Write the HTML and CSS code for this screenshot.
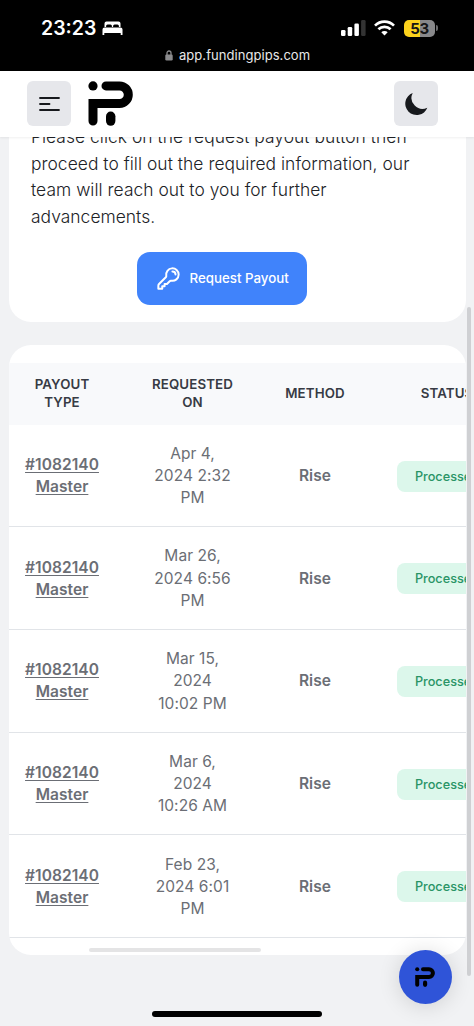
FILE: index.html
```html
<!DOCTYPE html>
<html lang="en">
<head>
<meta charset="utf-8">
<title>Payouts</title>
<link rel="stylesheet" href="styles.css">
</head>
<body>
<div class="status">
  <div class="status-row">
    <div class="clock"><span>23:23</span>
      <svg width="21" height="15" viewBox="0 0 21 15" fill="#fff"><path d="M2.500 6V2.500A2 2 0 0 1 4.500.5h12a2 2 0 0 1 2 2V6h-1.600V5a1.500 1.500 0 0 0-1.500-1.500h-2.800A1.500 1.500 0 0 0 11.100 5v1H9.900V5a1.500 1.500 0 0 0-1.500-1.500H5.600A1.500 1.500 0 0 0 4.100 5v1z"/><path d="M2.500 6.500h16a2 2 0 0 1 2 2V14h-1.800v-2H2.300v2H.5V8.500a2 2 0 0 1 2-2z"/></svg>
    </div>
    <div class="signals">
      <svg width="25" height="16" viewBox="0 0 25 16" fill="#fff"><rect x="0" y="10" width="4.500" height="6" rx="1.300"/><rect x="6.700" y="7" width="4.500" height="9" rx="1.300"/><rect x="13.400" y="3.500" width="4.500" height="12.500" rx="1.300"/><rect x="20.100" y="0" width="4.500" height="16" rx="1.300" fill="#333"/></svg>
      <svg class="wifi" width="21" height="16" viewBox="0 0 21 16" fill="none" stroke="#fff" stroke-width="2.700"><path d="M1 5.600a13.500 13.500 0 0 1 19 0M4.400 9.300a8.700 8.700 0 0 1 12.200 0"/><path d="M10.500 15.500 7.300 12.200a4.600 4.600 0 0 1 6.400 0z" fill="#fff" stroke="none"/></svg>
      <div class="battery">53</div><i class="battery-tip"></i>
    </div>
  </div>
  <div class="address"><svg width="8" height="11" viewBox="0 0 8 11"><path d="M2 5V3a2 2 0 0 1 4 0v2" fill="none" stroke="#8b8b8d" stroke-width="1.300"/><rect x=".3" y="4.500" width="7.400" height="6" rx="1.200" fill="#8b8b8d"/></svg><span>app.fundingpips.com</span></div>
</div>
<header class="topbar">
  <div class="square"><svg width="21" height="14" viewBox="0 0 21 14" stroke="#17191d" stroke-width="1.800" stroke-linecap="round"><path d="M1 1h19M1 7h9.500M1 13h19"/></svg></div>
  <svg class="logo" width="45" height="45" viewBox="0 0 45 45"><circle cx="5" cy="4.900" r="4.600"/><path d="M18 4.900H31.500A8.800 8.800 0 0 1 31.500 22.500H5V40" fill="none" stroke="#000" stroke-width="9" stroke-linecap="round"/><rect x="18" y="30.500" width="9.400" height="14.300" rx="4.700"/></svg>
  <div class="square moon"><svg width="24" height="24" viewBox="0 0 24 24" fill="#17191d"><path d="M8.700 1A11.400 11.400 0 1 0 23.300 15.800 11 11 0 0 1 8.700 1z"/></svg></div>
</header>
<main class="page">
  <section class="card intro">
    <p>Please click on the request payout button then<br>proceed to fill out the required information, our<br>team will reach out to you for further<br>advancements.</p>
    <button class="request"><svg width="25" height="25" viewBox="0 0 24 24" fill="none" stroke="#fff" stroke-width="1.900" stroke-linecap="round" stroke-linejoin="round"><path d="M15.750 5.250a3 3 0 0 1 3 3m3 0a6 6 0 0 1-7.030 5.910c-.560-.100-1.160.030-1.560.430L10.500 17.250H8.250v2.250H6v2.250H2.250v-2.820c0-.600.240-1.170.660-1.590l6.500-6.500c.400-.400.530-1 .430-1.560A6 6 0 1 1 21.750 8.250z"/></svg><span>Request Payout</span></button>
  </section>
  <section class="card payouts">
    <div class="row head"><div>PAYOUT<br>TYPE</div><div>REQUESTED<br>ON</div><div>METHOD</div><div>STATUS</div></div>
    <div class="row"><div class="account">#1082140<br>Master</div><div>Apr 4,<br>2024 2:32<br>PM</div><div class="method">Rise</div><div><span class="badge">Processed</span></div></div>
    <div class="row"><div class="account">#1082140<br>Master</div><div>Mar 26,<br>2024 6:56<br>PM</div><div class="method">Rise</div><div><span class="badge">Processed</span></div></div>
    <div class="row"><div class="account">#1082140<br>Master</div><div>Mar 15,<br>2024<br>10:02 PM</div><div class="method">Rise</div><div><span class="badge">Processed</span></div></div>
    <div class="row"><div class="account">#1082140<br>Master</div><div>Mar 6,<br>2024<br>10:26 AM</div><div class="method">Rise</div><div><span class="badge">Processed</span></div></div>
    <div class="row"><div class="account">#1082140<br>Master</div><div>Feb 23,<br>2024 6:01<br>PM</div><div class="method">Rise</div><div><span class="badge">Processed</span></div></div>
    <div class="hscroll"></div>
  </section>
</main>
<div class="vscroll"></div>
<div class="chat"><svg width="20" height="20" viewBox="0 0 45 45"><circle cx="5" cy="4.900" r="4.600"/><path d="M18 4.900H31.500A8.800 8.800 0 0 1 31.500 22.500H5V40" fill="none" stroke="#000" stroke-width="9" stroke-linecap="round"/><rect x="18" y="30.500" width="9.400" height="14.300" rx="4.700"/></svg></div>
<div class="home"></div>
</body>
</html>
```
FILE: styles.css
```css
* { box-sizing: border-box; }
body { margin: 0; width: 474px; height: 1026px; overflow: hidden; position: relative; display: flex; flex-direction: column; background: #f1f2f4; font-family: Inter, "Liberation Sans", sans-serif; }
svg { display: block; flex: none; }
.status { height: 71px; flex: none; background: #000; color: #fff; padding-top: 16px; }
.status-row { height: 24px; display: flex; justify-content: space-between; padding: 0 36px 0 41px; }
.clock { display: flex; align-items: center; gap: 6px; font-size: 19.500px; font-weight: 600; line-height: 24px; }
.signals { display: flex; align-items: center; }
.wifi { margin-left: 8px; }
.battery { margin-left: 9px; width: 31px; height: 17px; border-radius: 5px; background: linear-gradient(90deg, #fcd21c 53%, #88888a 53%); color: #161616; font-size: 15px; font-weight: 700; line-height: 17px; letter-spacing: -.5px; text-align: center; }
.battery-tip { width: 2px; height: 6px; margin-left: 1px; border-radius: 0 2px 2px 0; background: #6b6b6d; }
.address { display: flex; align-items: center; gap: 6px; padding-left: 165px; margin-top: 5px; height: 20px; font-size: 13px; color: #e8e8e8; letter-spacing: .05px; }
.topbar { height: 66px; flex: none; background: #fff; display: flex; align-items: flex-start; padding: 10px 36px 0 27px; z-index: 1; box-shadow: 0 1px 2px #00000010; }
.square { width: 44px; height: 45px; border-radius: 6px; background: #e6e7eb; display: flex; align-items: center; justify-content: center; }
.logo { margin-left: 17px; }
.moon { margin-left: auto; }
.page { flex: 1; min-height: 0; padding: 0 8.500px 0 9px; }
.card { background: #fff; overflow: hidden; border-radius: 22px; }
.intro { height: 185px; border-radius: 0 0 22px 22px; padding: 0 22px; }
.intro p { margin: -13px 0 0; font-size: 17.400px; line-height: 26.600px; letter-spacing: .045px; font-weight: 300; color: #202226; white-space: nowrap; }
.request { display: flex; align-items: center; gap: 9px; width: 170px; height: 53px; margin: 21.500px 0 0 105.500px; padding: 0 0 0 19px; border: 0; border-radius: 13px; background: #4083fb; color: #fff; font: 500 13.300px Inter, sans-serif; white-space: nowrap; }
.payouts { margin-top: 23px; height: 610px; padding-top: 18px; }
.row { display: grid; grid-template-columns: 106px 155px 90px 174px; width: 525px; height: 102.700px; padding-top: 1.500px; align-items: center; text-align: center; font-size: 15.500px; line-height: 22.200px; letter-spacing: .06px; color: #6b6e75; border-bottom: 1.500px solid #e1e4e8; }
.head { height: 61.500px; padding: 0; background: #f8f9fb; border: 0; color: #373b44; font-size: 13.300px; line-height: 17.700px; font-weight: 600; letter-spacing: .12px; }
.account { font-weight: 600; text-decoration: underline; text-underline-offset: 2px; }
.method { font-weight: 600; }
.badge { display: inline-block; height: 31px; padding: 0 17.500px; border-radius: 8px; background: #dcf7eb; color: #299466; font-size: 12.700px; font-weight: 500; line-height: 31px; letter-spacing: 0; vertical-align: middle; }
.hscroll { width: 172px; height: 4px; margin: 10px 0 0 80px; border-radius: 2px; background: #e4e4e5; }
.vscroll { position: absolute; left: 467px; top: 307px; width: 4px; height: 669px; border-radius: 2px; background: #cfd0d3; }
.chat { position: absolute; left: 398.500px; top: 950px; width: 53px; height: 54px; border-radius: 50%; background: #2f54d8; display: flex; align-items: center; justify-content: center; box-shadow: 0 2px 22px #00000024; }
.home { position: absolute; left: 152px; top: 1011px; width: 170px; height: 6px; border-radius: 3px; background: #000; }
```
